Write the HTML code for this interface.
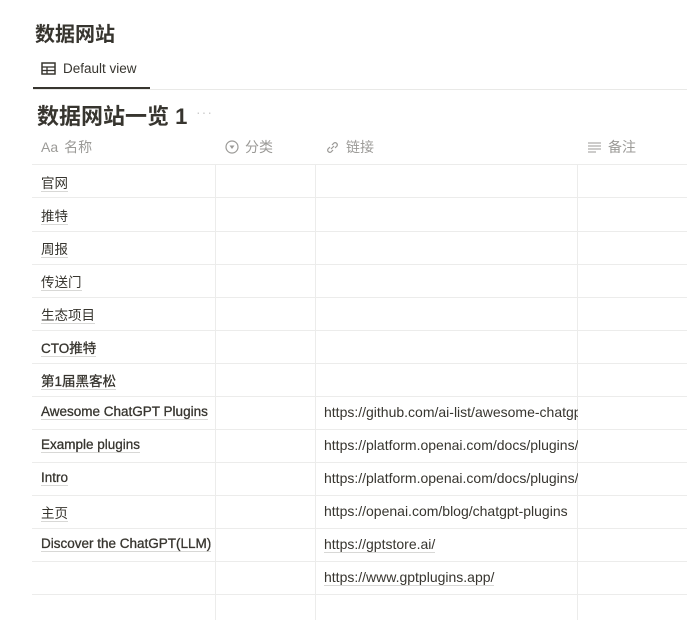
<!DOCTYPE html><html><head><meta charset="utf-8"><style>
body{margin:0;background:#fff;font-family:"Liberation Sans","Noto Sans CJK SC",sans-serif;color:#37352f;width:687px;height:620px;overflow:hidden;position:relative}
.a{position:absolute}
.t1{left:35px;top:18px;font-size:20px;font-weight:bold}
.tab{left:41px;top:61px;font-size:13.5px;display:flex;align-items:center;gap:7px}
.ul{left:33px;top:87px;width:117px;height:2px;background:#37352f}
.hl{left:33px;top:89px;width:654px;height:1px;background:#e9e9e7}
.t2{left:37px;top:99px;font-size:22px;font-weight:bold}
.dots{left:196px;top:104px;color:#ccc;font-size:14px;letter-spacing:1px}
.hd{top:137px;font-size:14px;color:#9b9a97;display:flex;align-items:center;gap:6px}
.row{left:32px;width:655px;height:1px;background:#ececeb}
.col{top:164px;height:456px;width:1px;background:#ececeb}
.c{font-size:13.5px;left:41px;-webkit-text-stroke:0.3px #37352f}
.z{-webkit-text-stroke:0;top:172px}
.c span,.l span{border-bottom:1px solid #d8d8d6}
.l{font-size:14px;left:324px}
</style></head><body>
<div class="a t1">数据网站</div>
<div class="a tab"><svg width="15" height="13" viewBox="0 0 15 13"><rect x="1" y="1" width="13" height="11" fill="none" stroke="#37352f" stroke-width="1.5"/><line x1="1" y1="5" x2="14" y2="5" stroke="#37352f" stroke-width="1.3"/><line x1="1" y1="8.5" x2="14" y2="8.5" stroke="#37352f" stroke-width="1.3"/><line x1="6" y1="5" x2="6" y2="12" stroke="#37352f" stroke-width="1.3"/></svg>Default view</div>
<div class="a ul"></div><div class="a hl"></div>
<div class="a t2">数据网站一览 1</div><div class="a dots">···</div>
<div class="a hd" style="left:41px"><span>Aa</span>名称</div>
<div class="a hd" style="left:225px"><svg width="14" height="14"><circle cx="7" cy="7" r="6" fill="none" stroke="#9b9a97" stroke-width="1.2"/><path d="M4.5 5.5h5L7 9z" fill="#9b9a97"/></svg>分类</div>
<div class="a hd" style="left:325px"><svg width="15" height="15" viewBox="0 0 15 15"><path d="M6 9L9 6M5 7L3 9a2.2 2.2 0 003 3l2-2M10 8l2-2a2.2 2.2 0 00-3-3L7 5" fill="none" stroke="#9b9a97" stroke-width="1.2"/></svg>链接</div>
<div class="a hd" style="left:587px"><svg width="15" height="12"><path d="M1 2h13M1 5h13M1 8h13M1 11h8" stroke="#9b9a97" stroke-width="1.1"/></svg>备注</div>
<div class="a row" style="top:164px"></div>
<div class="a col" style="left:215px"></div><div class="a col" style="left:315px"></div><div class="a col" style="left:577px"></div>
<div class="a row" style="top:197px"></div><div class="a row" style="top:231px"></div><div class="a row" style="top:264px"></div><div class="a row" style="top:297px"></div><div class="a row" style="top:330px"></div><div class="a row" style="top:363px"></div><div class="a row" style="top:396px"></div><div class="a row" style="top:429px"></div><div class="a row" style="top:462px"></div><div class="a row" style="top:495px"></div><div class="a row" style="top:528px"></div><div class="a row" style="top:561px"></div><div class="a row" style="top:594px"></div>
<div class="a c z" style="top:172px"><span>官网</span></div>
<div class="a c z" style="top:205px"><span>推特</span></div>
<div class="a c z" style="top:238px"><span>周报</span></div>
<div class="a c z" style="top:271px"><span>传送门</span></div>
<div class="a c z" style="top:304px"><span>生态项目</span></div>
<div class="a c" style="top:337px"><span>CTO推特</span></div>
<div class="a c" style="top:370px"><span>第1届黑客松</span></div>
<div class="a c" style="top:404px"><span>Awesome ChatGPT Plugins</span></div>
<div class="a c" style="top:437px"><span>Example plugins</span></div>
<div class="a c" style="top:470px"><span>Intro</span></div>
<div class="a c z" style="top:502px"><span>主页</span></div>
<div class="a c" style="top:536px"><span>Discover the ChatGPT(LLM)</span></div>
<div class="a l" style="top:404px;width:254px;overflow:hidden;white-space:nowrap"><span>https://github.com/ai-list/awesome-chatgpt-plugins</span></div>
<div class="a l" style="top:437px;width:254px;overflow:hidden;white-space:nowrap"><span>https://platform.openai.com/docs/plugins/examples</span></div>
<div class="a l" style="top:470px;width:254px;overflow:hidden;white-space:nowrap"><span>https://platform.openai.com/docs/plugins/introduction</span></div>
<div class="a l" style="top:503px;width:254px;overflow:hidden;white-space:nowrap"><span>https://openai.com/blog/chatgpt-plugins</span></div>
<div class="a l" style="top:536px"><span>https://gptstore.ai/</span></div>
<div class="a l" style="top:569px"><span>https://www.gptplugins.app/</span></div>
</body></html>
